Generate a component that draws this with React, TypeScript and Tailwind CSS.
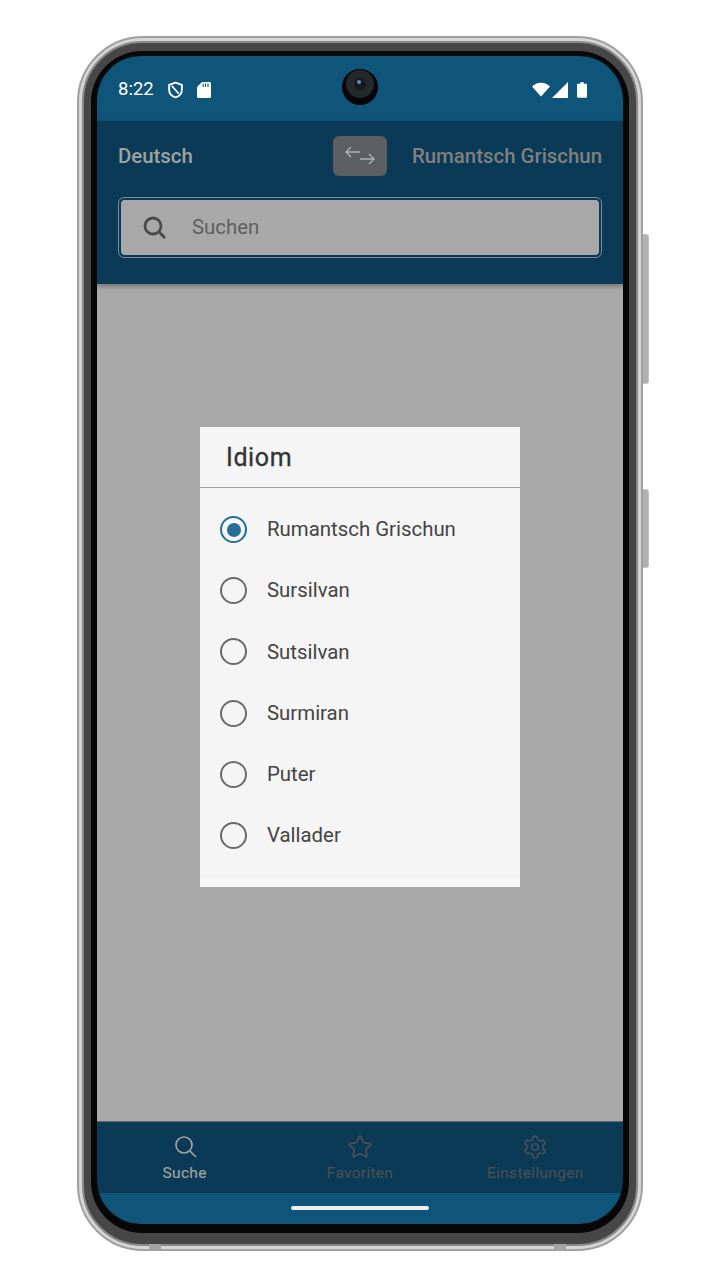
import { Settings, Star } from 'lucide-react';

const idioms = ['Rumantsch Grischun', 'Sursilvan', 'Sutsilvan', 'Surmiran', 'Puter', 'Vallader'];

function SearchGlyph({ width, className }: { width: number; className?: string }) {
  return (
    <svg className={className} width="24" height="24" viewBox="0 0 24 24" fill="none" stroke="currentColor" strokeWidth={width}>
      <circle cx="10" cy="10" r="8" />
      <path d="M15.800 15.800 22 22" />
    </svg>
  );
}

function StatusBar() {
  return (
    <div className="relative flex h-[65px] shrink-0 items-center justify-between bg-[#0f5579] pl-[21px] pr-[36px] pt-[2px] text-white">
      <div className="flex items-center">
        <span className="text-[18.500px] leading-none">8:22</span>
        <svg className="ml-[14px]" width="15" height="18" viewBox="0 0 16 18" fill="none">
          <path d="M8 1.200 14.800 3.600V8.400C14.800 12.400 12 15.600 8 16.800 4 15.600 1.200 12.400 1.200 8.400V3.600Z" stroke="white" strokeWidth="2" strokeLinejoin="round" />
          <path d="M4 4.500 11.500 13" stroke="white" strokeWidth="1.800" />
        </svg>
        <svg className="ml-[14px]" width="14" height="16" viewBox="0 0 14 16">
          <path d="M5 0H12.500C13.300 0 14 .7 14 1.500V14.500C14 15.300 13.300 16 12.500 16H1.500C.7 16 0 15.300 0 14.500V5Z" fill="white" />
          <path d="M6.200 1.500V5M8.600 1.500V5M11 1.500V5" stroke="#0f5579" strokeWidth="1.100" />
        </svg>
      </div>
      {/* camera */}
      <div className="absolute left-[245px] top-[13px] flex h-[36px] w-[36px] items-start justify-center rounded-full bg-[#050505]">
        <div className="mt-[1px] flex h-[28px] w-[28px] items-center justify-center rounded-full bg-[#23282c]">
          <div className="h-[12px] w-[12px] rounded-full bg-[#141a20]">
            <div className="ml-[3px] mt-[2px] h-[4px] w-[4px] rounded-full bg-[#5f8fb5]" />
          </div>
        </div>
      </div>
      <div className="flex items-center">
        <svg width="18" height="15" viewBox="0 0 19 15">
          <path d="M0 4.400C2.400 1.800 5.800.4 9.500.4S16.600 1.800 19 4.400L9.500 15Z" fill="white" />
        </svg>
        <svg className="ml-[2px]" width="16" height="16" viewBox="0 0 16 16">
          <path d="M16 0V16H0Z" fill="white" />
        </svg>
        <svg className="ml-[9px]" width="10" height="16" viewBox="0 0 11 17">
          <path d="M3.500 0H7.500V1.500H10C10.500 1.500 11 2 11 2.500V16C11 16.500 10.500 17 10 17H1C.5 17 0 16.500 0 16V2.500C0 2 .5 1.500 1 1.500H3.500Z" fill="white" />
        </svg>
      </div>
    </div>
  );
}

function AppHeader() {
  return (
    <div className="relative z-10 h-[163px] shrink-0 bg-[#0a3a55] px-[21px] shadow-[0_2px_5px_rgba(0,0,0,0.35)]">
      <div className="flex h-[68px] items-center pt-[2px]">
        <span className="w-[215px] text-[20.400px] font-medium text-[#a1a1a1]">Deutsch</span>
        <div className="flex h-[40px] w-[54px] shrink-0 items-center justify-center rounded-[6px] bg-[#5c5f61]">
          <svg width="30" height="20" viewBox="0 0 30 20" fill="none" stroke="#b0b0b0" strokeWidth="1.400">
            <path d="M1 6H15M6 1 1 6 6 11" />
            <path d="M15 13H29M24 8 29 13 24 18" />
          </svg>
        </div>
        <span className="ml-[25px] whitespace-nowrap text-[20.400px] font-medium text-[#808080]">Rumantsch Grischun</span>
      </div>
      <div className="mt-[8px] h-[61px] rounded-[6px] border border-[#7c8b95] p-[2px]">
        <div className="flex h-full items-center rounded-[4px] bg-[#a8a8a8] pl-[22px]">
          <SearchGlyph width={2.800} className="text-[#4a4a4a]" />
          <span className="ml-[25px] text-[20.400px] text-[#5f5f5f]">Suchen</span>
        </div>
      </div>
    </div>
  );
}

function IdiomDialog() {
  return (
    <div className="flex h-[460px] w-[320px] flex-col bg-[#f5f5f5]">
      <div className="flex h-[61px] shrink-0 items-center border-b border-[#a0a0a0] pl-[26px] text-[25px] font-normal leading-none tracking-[0.600px] text-[#333333] [-webkit-text-stroke:0.3px_#333333]">
        Idiom
      </div>
      <div className="flex flex-1 flex-col pt-[11px]">
        {idioms.map((name, i) => (
          <div key={name} className="flex h-[61.200px] shrink-0 items-center pl-[20px]">
            {i === 0 ? (
              <div className="flex h-[27px] w-[27px] items-center justify-center rounded-full border-[2.500px] border-[#246f96]">
                <div className="h-[14px] w-[14px] rounded-full bg-[#246f96]" />
              </div>
            ) : (
              <div className="h-[27px] w-[27px] rounded-full border-[2.500px] border-[#6a6a6a]" />
            )}
            <span className="ml-[20px] text-[20.400px] text-[#444444]">{name}</span>
          </div>
        ))}
      </div>
      <div className="h-[9px] shrink-0 bg-[#f7f7f7]" />
    </div>
  );
}

function BottomNav() {
  return (
    <div className="shrink-0">
      <div className="grid h-[72px] grid-cols-3 border-t border-[#5f6a70] bg-[#0a3a55]">
        <div className="flex flex-col items-center pt-[13px] text-[#a0a0a0]">
          <SearchGlyph width={1.700} className="translate-x-[1px]" />
          <span className="mt-[4px] text-[15.500px] leading-[20px] tracking-[0.300px] [-webkit-text-stroke:0.2px_#a0a0a0]">Suche</span>
        </div>
        <div className="flex flex-col items-center pt-[12px] text-[#465058]">
          <Star size={26} strokeWidth={1.600} />
          <span className="mt-[3px] text-[15.500px] leading-[20px] tracking-[0.300px] [-webkit-text-stroke:0.2px_#465058]">Favoriten</span>
        </div>
        <div className="flex flex-col items-center pt-[12px] text-[#465058]">
          <Settings size={26} strokeWidth={1.600} />
          <span className="mt-[3px] text-[15.500px] leading-[20px] tracking-[0.300px] [-webkit-text-stroke:0.2px_#465058]">Einstellungen</span>
        </div>
      </div>
      <div className="flex h-[31px] items-start justify-center bg-[#0f5579] pt-[13px]">
        <div className="h-[4px] w-[138px] rounded-full bg-[#f0f0f0]" />
      </div>
    </div>
  );
}

export default function App() {
  return (
    <div className="flex h-[1280px] w-[720px] justify-center bg-white pt-[36px] font-['Roboto',sans-serif]">
      <div className="relative h-[1215px] w-[566px]">
        {/* side buttons */}
        <div className="absolute left-[565px] top-[198px] h-[150px] w-[7px] rounded-r-[3px] border border-l-0 border-[#c4c4c4] bg-[#b0b0b0]" />
        <div className="absolute left-[565px] top-[453px] h-[79px] w-[7px] rounded-r-[3px] border border-l-0 border-[#c4c4c4] bg-[#b0b0b0]" />
        {/* frame rings */}
        <div className="relative h-full rounded-[66px] border-[2px] border-[#a0a0a0] bg-[#d6d6d6] p-[3px]">
          <div className="h-full rounded-[60px] border-[2px] border-[#8a8a8a] bg-[#474747] p-[7px] pt-[8px] pb-[11px]">
            <div className="h-full rounded-[51px] bg-[#070707] p-[6px] pt-[5px] pb-[9px]">
              <div className="flex h-full flex-col overflow-hidden rounded-[44px]">
                <StatusBar />
                <AppHeader />
                <div className="flex flex-1 justify-center bg-[#a8a8a8] pt-[143px]">
                  <IdiomDialog />
                </div>
                <BottomNav />
              </div>
            </div>
          </div>
        </div>
        {/* antenna bands */}
        <div className="absolute bottom-0 left-[72px] h-[7px] w-[12px] bg-[#a3a3a3]" />
        <div className="absolute bottom-0 left-[477px] h-[7px] w-[12px] bg-[#a3a3a3]" />
      </div>
    </div>
  );
}
